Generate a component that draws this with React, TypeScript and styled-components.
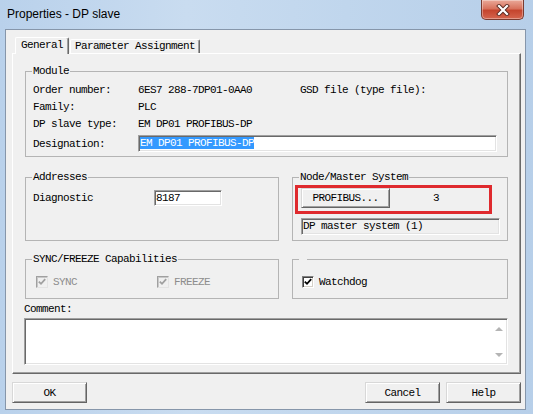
import styled, { createGlobalStyle } from "styled-components";

const GlobalStyle = createGlobalStyle`
  html, body {
    margin: 0;
    padding: 0;
  }
  body {
    width: 533px;
    height: 414px;
    overflow: hidden;
  }
  * {
    box-sizing: border-box;
  }
`;

const monoFont = `"Liberation Mono", "DejaVu Sans Mono", monospace`;

const Window = styled.div`
  width: 533px;
  height: 414px;
  display: flex;
  flex-direction: column;
  background: linear-gradient(90deg, #b9d1eb 0%, #c9dcf0 35%, #c0d6ed 65%, #b7cfe9 100%);
  font-family: ${monoFont};
  font-size: 11px;
  letter-spacing: -0.6px;
  color: #000;
`;

const TitleBar = styled.div`
  height: 29px;
  flex: none;
  display: flex;
  align-items: flex-start;
  justify-content: space-between;
  padding: 0 9px 0 7px;
`;

const Title = styled.div`
  font-family: "Liberation Sans", Arial, sans-serif;
  font-size: 12px;
  letter-spacing: 0;
  line-height: 15px;
  margin-top: 7px;
`;

const CloseBtn = styled.div`
  width: 43px;
  height: 20px;
  border: 1px solid #7a3b30;
  border-top: none;
  border-radius: 0 0 5px 5px;
  background: linear-gradient(180deg, #eaa999 0%, #d8725d 45%, #c5452e 55%, #d5654e 100%);
  box-shadow: inset 0 0 0 1px rgba(255, 255, 255, 0.35);
  display: flex;
  align-items: center;
  justify-content: center;
`;

const Client = styled.div`
  flex: 1;
  margin: 0 7px 4px 5px;
  border: 1px solid #8696aa;
  background: #f0f0f0;
  padding: 7px 4px 0 6px;
  display: flex;
  flex-direction: column;
`;

const TabStrip = styled.div`
  height: 16px;
  display: flex;
  align-items: flex-end;
  gap: 1px;
  padding-left: 3px;
`;

const Tab = styled.div<{ $active?: boolean }>`
  position: relative;
  z-index: ${(p) => (p.$active ? 1 : 0)};
  height: ${(p) => (p.$active ? "17px" : "14px")};
  margin-bottom: ${(p) => (p.$active ? "-1px" : "0")};
  padding: ${(p) => (p.$active ? "1px 5px 0" : "0 4px")};
  line-height: 12px;
  background: #f0f0f0;
  border: 1px solid;
  border-bottom: none;
  border-color: #fff #696969 #696969 #fff;
  border-radius: 2px 2px 0 0;
  box-shadow: inset -1px 0 0 #a0a0a0;
`;

const Panel = styled.div`
  height: 321px;
  border: 1px solid;
  border-color: #fff #696969 #696969 #fff;
  box-shadow: inset -1px -1px 0 #a0a0a0;
  padding: 11px 12px 0;
  display: flex;
  flex-direction: column;
`;

const Group = styled.fieldset<{ $pad?: string }>`
  margin: 0;
  min-width: 0;
  padding: ${(p) => p.$pad ?? "4px 7px 4px"};
  border: 1px solid #b4b4b4;
`;

const Legend = styled.legend`
  padding: 0 1px;
  margin-left: -1px;
  line-height: 12px;
  height: 12px;
`;

const ModuleGrid = styled.div`
  display: grid;
  grid-template-columns: 105px 162px 1fr;
  grid-auto-rows: 17px;
  align-items: center;
`;

const Cell = styled.div`
  white-space: nowrap;
`;

const Field = styled.div<{ $w: number; $h?: number; $readOnly?: boolean }>`
  width: ${(p) => p.$w}px;
  height: ${(p) => p.$h ?? 17}px;
  line-height: 13px;
  padding: 1px 1px 0;
  white-space: nowrap;
  overflow: hidden;
  background: ${(p) => (p.$readOnly ? "#f0f0f0" : "#fff")};
  border: 1px solid;
  border-color: #a0a0a0 #fff #fff #a0a0a0;
  box-shadow: inset 1px 1px 0 #696969, inset -1px -1px 0 #e3e3e3;
`;

const Selected = styled.span`
  background: #3399ff;
  color: #fff;
`;

const Row = styled.div<{ $top?: number; $left?: number }>`
  display: flex;
  align-items: center;
  margin-top: ${(p) => p.$top ?? 0}px;
  margin-left: ${(p) => p.$left ?? 0}px;
`;

const LowerGrid = styled.div`
  display: grid;
  grid-template-columns: 254px 216px;
  grid-template-rows: 70px 46px;
  justify-content: space-between;
  row-gap: 12px;
  margin-top: 14px;
`;

const Label = styled.span<{ $w?: number }>`
  width: ${(p) => (p.$w ? `${p.$w}px` : "auto")};
  flex: none;
  white-space: nowrap;
`;

const Highlight = styled.div`
  width: 197px;
  height: 29px;
  margin: 2px 0 0 -5px;
  border: 3px solid #df2a2e;
  padding: 0 0 3px 3px;
  display: flex;
  align-items: center;
`;

const Button = styled.div<{ $w: number; $h?: number }>`
  width: ${(p) => p.$w}px;
  height: ${(p) => p.$h ?? 21}px;
  flex: none;
  display: flex;
  align-items: center;
  justify-content: center;
  background: #f0f0f0;
  border: 1px solid;
  border-color: #d8d8d8 #646464 #646464 #d8d8d8;
  box-shadow: inset 1px 1px 0 #fff, inset -1px -1px 0 #a0a0a0;
  white-space: nowrap;
`;

const NodeNumber = styled.span`
  margin-left: 43px;
`;

const CheckItem = styled.label<{ $disabled?: boolean }>`
  display: flex;
  align-items: center;
  gap: 5px;
  color: ${(p) => (p.$disabled ? "#8d8d8d" : "#000")};
`;

const CheckBox = styled.span<{ $disabled?: boolean }>`
  width: 12px;
  height: 12px;
  flex: none;
  display: flex;
  align-items: center;
  justify-content: center;
  background: ${(p) => (p.$disabled ? "#f0f0f0" : "#fff")};
  border: 1px solid;
  border-color: ${(p) =>
    p.$disabled ? "#a0a0a0 #e3e3e3 #e3e3e3 #a0a0a0" : "#808080 #fff #fff #808080"};
  box-shadow: ${(p) =>
    p.$disabled ? "inset 1px 1px 0 #c8c8c8" : "inset 1px 1px 0 #404040, inset -1px -1px 0 #d4d0c8"};
`;

const SyncRow = styled.div`
  display: grid;
  grid-template-columns: 121px 1fr;
  margin: 11px 0 0 3px;
`;

const CommentLabel = styled.div`
  line-height: 12px;
  margin: 4px 0 0 -1px;
`;

const CommentBox = styled.div`
  width: 484px;
  height: 47px;
  margin: 3px 0 0 -1px;
  background: #fff;
  border: 1px solid;
  border-color: #a0a0a0 #fff #fff #a0a0a0;
  box-shadow: inset 1px 1px 0 #696969, inset -1px -1px 0 #e3e3e3;
  display: flex;
  justify-content: flex-end;
  padding: 1px 1px 1px 1px;
`;

const ScrollTrack = styled.div`
  width: 15px;
  display: flex;
  flex-direction: column;
  justify-content: space-between;
  align-items: center;
  padding: 7px 0 6px;
`;

const Arrow = styled.span<{ $down?: boolean }>`
  width: 0;
  height: 0;
  border-left: 4px solid transparent;
  border-right: 4px solid transparent;
  ${(p) => (p.$down ? "border-top: 4px solid #b4b4b4;" : "border-bottom: 4px solid #b4b4b4;")}
`;

const ButtonBar = styled.div`
  margin-top: 8px;
  width: 509px;
  display: flex;
  justify-content: space-between;
`;

const ButtonGroup = styled.div`
  display: flex;
  gap: 6px;
`;

function Check({ disabled }: { disabled?: boolean }) {
  return (
    <CheckBox $disabled={disabled}>
      <svg width="8" height="8" viewBox="0 0 8 8">
        <path
          d="M0.8 3.6 L3 5.8 L7.2 1.2"
          fill="none"
          stroke={disabled ? "#a0a0a0" : "#000"}
          strokeWidth="1.8"
        />
      </svg>
    </CheckBox>
  );
}

export default function App() {
  return (
    <>
      <GlobalStyle />
      <Window>
        <TitleBar>
          <Title>Properties - DP slave</Title>
          <CloseBtn>
            <svg width="14" height="12" viewBox="0 0 14 12">
              <path d="M3 2 L11 10 M11 2 L3 10" stroke="#5a2a22" strokeWidth="4" strokeLinecap="square" />
              <path d="M3 2 L11 10 M11 2 L3 10" stroke="#fff" strokeWidth="2.2" strokeLinecap="square" />
            </svg>
          </CloseBtn>
        </TitleBar>
        <Client>
          <TabStrip>
            <Tab $active>General</Tab>
            <Tab>Parameter Assignment</Tab>
          </TabStrip>
          <Panel>
            <Group>
              <Legend>Module</Legend>
              <ModuleGrid>
                <Cell>Order number:</Cell>
                <Cell>6ES7 288-7DP01-0AA0</Cell>
                <Cell>GSD file (type file):</Cell>
                <Cell>Family:</Cell>
                <Cell>PLC</Cell>
                <Cell />
                <Cell>DP slave type:</Cell>
                <Cell>EM DP01 PROFIBUS-DP</Cell>
                <Cell />
              </ModuleGrid>
              <Row $top={3}>
                <Label $w={105}>Designation:</Label>
                <Field $w={359}>
                  <Selected>EM DP01 PROFIBUS-DP</Selected>
                </Field>
              </Row>
            </Group>
            <LowerGrid>
              <Group $pad="7px 7px 4px">
                <Legend>Addresses</Legend>
                <Row>
                  <Label $w={121}>Diagnostic</Label>
                  <Field $w={68} $h={16}>
                    8187
                  </Field>
                </Row>
              </Group>
              <Group $pad="0 7px 4px">
                <Legend>Node/Master System</Legend>
                <Highlight>
                  <Button $w={89} $h={20}>
                    PROFIBUS...
                  </Button>
                  <NodeNumber>3</NodeNumber>
                </Highlight>
                <Row $top={4} $left={1}>
                  <Field $w={202} $readOnly>
                    DP master system (1)
                  </Field>
                </Row>
              </Group>
              <Group $pad="0 7px 4px">
                <Legend>SYNC/FREEZE Capabilities</Legend>
                <SyncRow>
                  <CheckItem $disabled>
                    <Check disabled />
                    SYNC
                  </CheckItem>
                  <CheckItem $disabled>
                    <Check disabled />
                    FREEZE
                  </CheckItem>
                </SyncRow>
              </Group>
              <Group $pad="0 7px 4px">
                <Legend>&nbsp;</Legend>
                <Row $top={11} $left={2}>
                  <CheckItem>
                    <Check />
                    Watchdog
                  </CheckItem>
                </Row>
              </Group>
            </LowerGrid>
            <CommentLabel>Comment:</CommentLabel>
            <CommentBox>
              <ScrollTrack>
                <Arrow />
                <Arrow $down />
              </ScrollTrack>
            </CommentBox>
          </Panel>
          <ButtonBar>
            <Button $w={75}>OK</Button>
            <ButtonGroup>
              <Button $w={75}>Cancel</Button>
              <Button $w={75}>Help</Button>
            </ButtonGroup>
          </ButtonBar>
        </Client>
      </Window>
    </>
  );
}
